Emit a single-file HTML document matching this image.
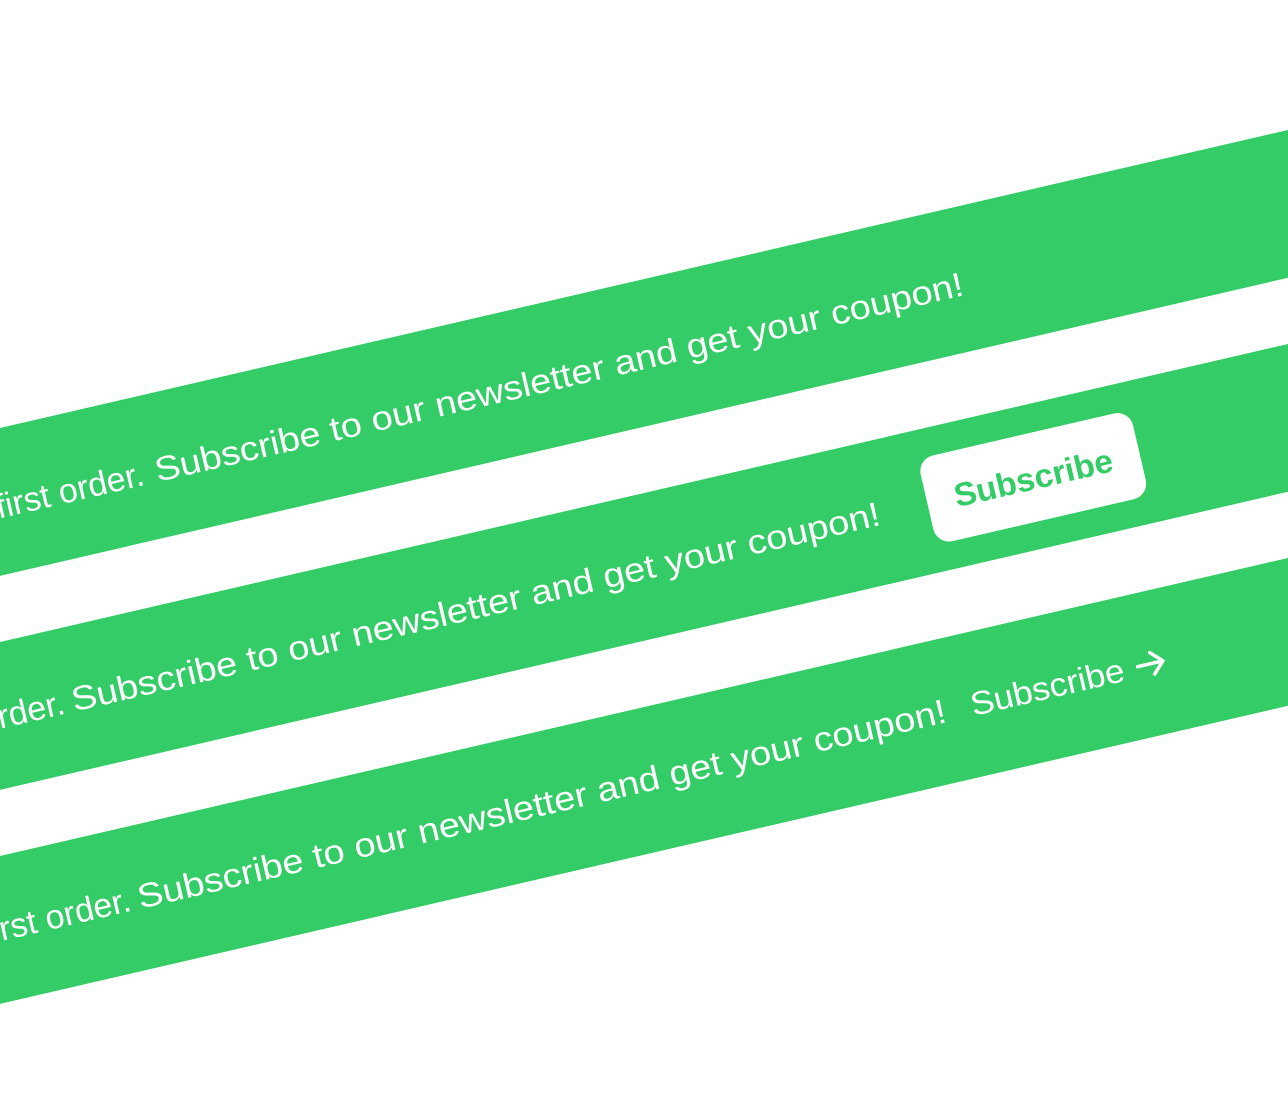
<!DOCTYPE html>
<html><head><meta charset="utf-8"><style>
html,body{margin:0;padding:0;background:#fff;width:1288px;height:1104px;overflow:hidden}
svg{display:block}
text{font-family:"Liberation Sans",sans-serif;fill:#fff}
</style></head><body>
<svg width="1288" height="1104" viewBox="0 0 1288 1104" xmlns="http://www.w3.org/2000/svg">
<g transform="rotate(-13.03)">
  <rect x="-400" y="417" width="2200" height="144" fill="#34cc66"/>
  <rect x="-400" y="625.5" width="2200" height="144" fill="#34cc66"/>
  <rect x="-400" y="834" width="2200" height="144" fill="#34cc66"/>

  <text x="33" y="505" font-size="34" text-anchor="end">Get 10% off your first order.</text>
  <text x="45" y="505" font-size="34" textLength="829" lengthAdjust="spacingAndGlyphs">Subscribe to our newsletter and get your coupon!</text>

  <text x="-96" y="710" font-size="34" text-anchor="end">Get 10% off your first order.</text>
  <text x="-88" y="710" font-size="34" textLength="829" lengthAdjust="spacingAndGlyphs">Subscribe to our newsletter and get your coupon!</text>
  <rect x="790" y="654" width="218" height="88" rx="16" fill="#fff"/>
  <text x="899" y="710" font-size="33" font-weight="bold" text-anchor="middle" textLength="162" lengthAdjust="spacingAndGlyphs" style="fill:#34cc66">Subscribe</text>

  <text x="-76" y="917" font-size="34" text-anchor="end">Get 10% off your first order.</text>
  <text x="-68" y="917" font-size="34" textLength="829" lengthAdjust="spacingAndGlyphs">Subscribe to our newsletter and get your coupon!</text>
  <text x="787" y="917" font-size="33" textLength="157" lengthAdjust="spacingAndGlyphs">Subscribe</text>
  <path d="M958 906 H984 M973 895 L984 906 L973 917" stroke="#fff" stroke-width="3.5" fill="none" stroke-linecap="round" stroke-linejoin="round"/>
</g>
</svg>
</body></html>
